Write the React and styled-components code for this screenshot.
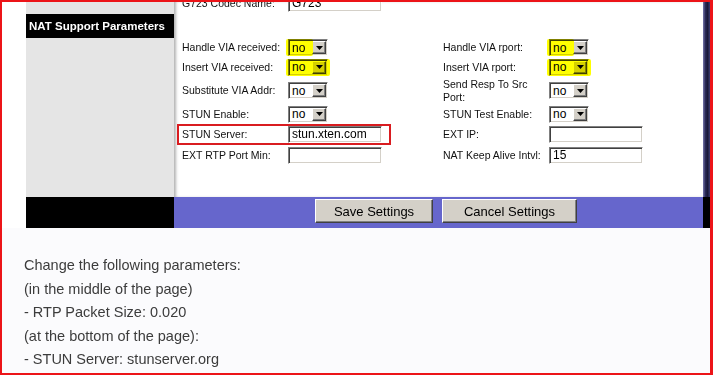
import styled, { createGlobalStyle } from "styled-components";

const GlobalStyle = createGlobalStyle`
  html, body {
    margin: 0;
    padding: 0;
    background: #fbfbfd;
  }
  * {
    box-sizing: border-box;
  }
`;

const rows = [
  {
    h: 20,
    after: 25,
    left: { label: "G723 Codec Name:", input: "G723" },
  },
  {
    h: 19,
    left: { label: "Handle VIA received:", select: "no", hl: "field" },
    right: { label: "Handle VIA rport:", select: "no", hl: "field" },
  },
  {
    h: 20,
    left: { label: "Insert VIA received:", select: "no", hl: "all" },
    right: { label: "Insert VIA rport:", select: "no", hl: "all" },
  },
  {
    h: 27,
    left: { label: "Substitute VIA Addr:", select: "no" },
    right: { label: ["Send Resp To Src", "Port:"], select: "no" },
  },
  {
    h: 20,
    left: { label: "STUN Enable:", select: "no" },
    right: { label: "STUN Test Enable:", select: "no" },
  },
  {
    h: 21,
    marked: true,
    left: { label: "STUN Server:", input: "stun.xten.com" },
    right: { label: "EXT IP:", input: "" },
  },
  {
    h: 20,
    left: { label: "EXT RTP Port Min:", input: "" },
    right: { label: "NAT Keep Alive Intvl:", input: "15" },
  },
];

const notes = [
  "Change the following parameters:",
  "(in the middle of the page)",
  "- RTP Packet Size: 0.020",
  "(at the bottom of the page):",
  "- STUN Server: stunserver.org",
];

function Field({ item }) {
  if (!item) return null;
  if (item.select !== undefined) {
    return (
      <Select>
        <SelectValue>{item.select}</SelectValue>
        <DropButton>
          <svg width="7" height="4" viewBox="0 0 7 4">
            <path d="M0 0h7L3.5 4z" fill="#000" />
          </svg>
        </DropButton>
        {item.hl && <Highlight $all={item.hl === "all"} />}
      </Select>
    );
  }
  return <TextBox>{item.input}</TextBox>;
}

function Label({ text }) {
  if (!text) return <LabelCell />;
  if (Array.isArray(text)) {
    return (
      <LabelCell>
        {text[0]}
        <br />
        {text[1]}
      </LabelCell>
    );
  }
  return <LabelCell>{text}</LabelCell>;
}

function App() {
  return (
    <>
      <GlobalStyle />
      <Frame>
        <Shot>
          <Margin />
          <Sidebar>
            <SectionTitle>NAT Support Parameters</SectionTitle>
          </Sidebar>
          <Content>
            <Form>
              {rows.map((row, i) => (
                <Row key={i} $h={row.h} $after={row.after || 0}>
                  {row.marked && <Mark />}
                  <Label text={row.left?.label} />
                  <Cell>
                    <Field item={row.left} />
                  </Cell>
                  <Label text={row.right?.label} />
                  <Cell>
                    <Field item={row.right} />
                  </Cell>
                </Row>
              ))}
            </Form>
          </Content>
          <Edge />
          <SideFoot />
          <ButtonBar>
            <Button $w={118}>Save Settings</Button>
            <Button $w={135}>Cancel Settings</Button>
          </ButtonBar>
          <EdgeFoot />
        </Shot>
        <Notes>
          {notes.map((line) => (
            <NoteLine key={line}>{line}</NoteLine>
          ))}
        </Notes>
      </Frame>
    </>
  );
}

const Frame = styled.div`
  width: 713px;
  height: 375px;
  overflow: hidden;
  border: 2px solid #ec1418;
  border-right-width: 3px;
  background: #fbfbfd;
  display: flex;
  flex-direction: column;
  font-family: "Liberation Sans", Arial, sans-serif;
`;

const Shot = styled.div`
  display: grid;
  grid-template-columns: 24px 148px 529px 7px;
  grid-template-rows: 195px 31px;
  flex-shrink: 0;
`;

const Margin = styled.div`
  grid-row: 1 / span 2;
  background: #ffffff;
`;

const Sidebar = styled.div`
  background: #e5e5e5;
  padding-top: 12px;
`;

const SectionTitle = styled.div`
  height: 24px;
  background: #000;
  color: #fff;
  font-weight: bold;
  font-size: 11.5px;
  line-height: 24px;
  padding-left: 3px;
  white-space: nowrap;
`;

const Content = styled.div`
  background: #fff;
  overflow: hidden;
  box-shadow: inset 3px 0 3px -1px rgba(0, 0, 0, 0.3);
`;

const Form = styled.div`
  margin-top: -9px;
  padding-left: 8px;
`;

const Row = styled.div`
  position: relative;
  display: grid;
  grid-template-columns: 106px 155px 106px 1fr;
  align-items: center;
  height: ${(p) => p.$h}px;
  margin-bottom: ${(p) => p.$after}px;
`;

const Mark = styled.span`
  position: absolute;
  left: -5px;
  top: 0;
  width: 214px;
  height: 21px;
  border: 2px solid #d91c20;
  pointer-events: none;
`;

const LabelCell = styled.div`
  font-size: 10.5px;
  line-height: 13px;
  color: #111;
  white-space: nowrap;
`;

const Cell = styled.div`
  display: flex;
  align-items: center;
`;

const sunken = `
  border: 1px solid;
  border-color: #808080 #ffffff #ffffff #808080;
  box-shadow: inset 1px 1px 0 #404040, inset -1px -1px 0 #d4d0c8;
`;

const Select = styled.div`
  position: relative;
  display: flex;
  align-items: center;
  width: 40px;
  height: 17px;
  background: #fff;
  ${sunken}
  padding: 2px 2px 2px 3px;
`;

const SelectValue = styled.span`
  flex: 1;
  font-size: 12px;
  line-height: 12px;
  color: #000;
`;

const DropButton = styled.span`
  display: flex;
  align-items: center;
  justify-content: center;
  width: 14px;
  height: 13px;
  margin-right: -1px;
  background: #d4d0c8;
  border: 1px solid;
  border-color: #ffffff #404040 #404040 #ffffff;
  box-shadow: inset -1px -1px 0 #808080;
`;

const Highlight = styled.span`
  position: absolute;
  left: -3px;
  top: -1px;
  bottom: -1px;
  right: ${(p) => (p.$all ? "-3px" : "14px")};
  background: #ffff00;
  mix-blend-mode: multiply;
  border-radius: 2px;
`;

const TextBox = styled.div`
  width: 94px;
  height: 17px;
  background: #fff;
  ${sunken}
  padding: 0 3px;
  font-size: 12px;
  line-height: 15px;
  color: #000;
`;

const Edge = styled.div`
  background: linear-gradient(
    to right,
    #7474aa 0%,
    #2a2a56 35%,
    #181838 65%,
    #3c3c72 100%
  );
`;

const SideFoot = styled.div`
  background: #000;
`;

const ButtonBar = styled.div`
  background: #6666cc;
  display: flex;
  align-items: flex-start;
  gap: 9px;
  padding: 2px 0 0 141px;
`;

const Button = styled.button`
  width: ${(p) => p.$w}px;
  height: 24px;
  background: #d4d0c8;
  border: 1px solid;
  border-color: #ffffff #404040 #404040 #ffffff;
  box-shadow: inset -1px -1px 0 #808080;
  font-family: "Liberation Sans", Arial, sans-serif;
  font-size: 13px;
  color: #000;
  padding: 0;
`;

const EdgeFoot = styled.div`
  background: #000;
`;

const Notes = styled.div`
  padding: 26px 0 0 22px;
  color: #3c3c3c;
  font-size: 14.5px;
  line-height: 23.6px;
`;

const NoteLine = styled.div``;

export default App;
